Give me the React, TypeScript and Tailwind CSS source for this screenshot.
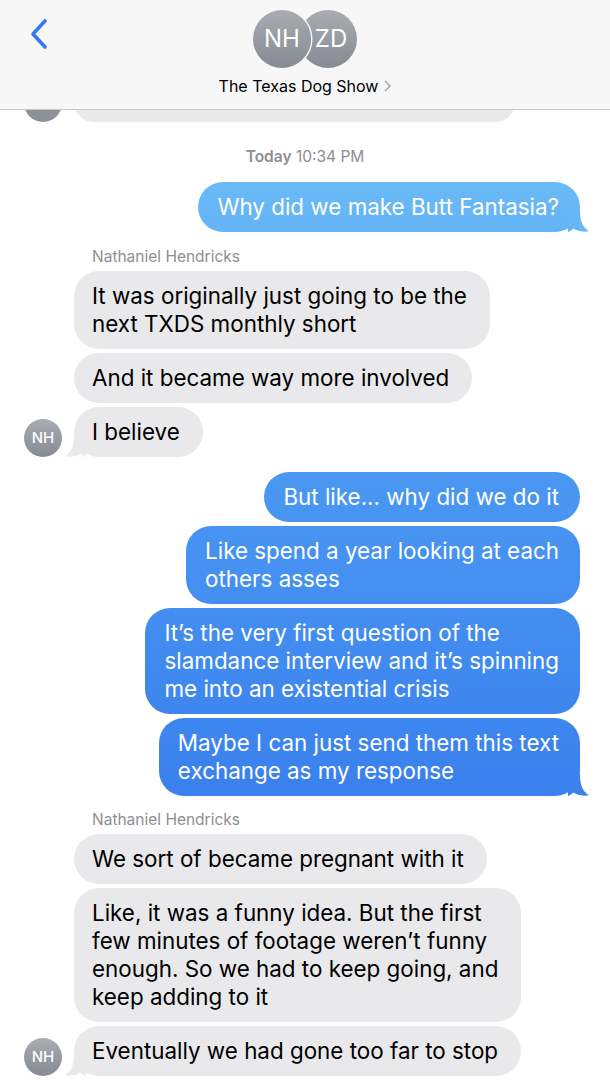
import React from 'react';

type Msg = { text: React.ReactNode; tail?: boolean; avatar?: boolean };

const font = { fontFamily: 'Inter, "Liberation Sans", sans-serif' };

const SentTail = ({ color }: { color: string }) => (
  <svg className="absolute -right-[10px] bottom-0" width="22" height="22" viewBox="0 0 22 22">
    <path d="M0 0 H12 C12 10 14 17 21 21.3 C14 22.4 9 21 5.5 18.6 C3.5 20.5 1.5 21.5 0 22 Z" fill={color} />
  </svg>
);

const ReceivedTail = () => (
  <svg className="absolute -left-[10px] bottom-0" width="22" height="22" viewBox="0 0 22 22">
    <path d="M22 0 H10 C10 10 8 17 1 21.3 C8 22.4 13 21 16.5 18.6 C18.5 20.5 20.5 21.5 22 22 Z" fill="#e9e9eb" />
  </svg>
);

const Avatar = ({ size = 'small' }: { size?: 'small' | 'big' }) => (
  <div
    className={
      size === 'small'
        ? 'w-[38px] h-[38px] rounded-full bg-gradient-to-b from-[#a9acb3] to-[#868a92] flex items-center justify-center text-white text-[15px] font-medium'
        : 'w-[58px] h-[58px] rounded-full bg-gradient-to-b from-[#a9acb3] to-[#868a92] flex items-center justify-center text-white text-[24px]'
    }
  >
    NH
  </div>
);

const Sent = ({ text, tail, tailColor }: { text: React.ReactNode; tail?: boolean; tailColor?: string }) => (
  <div className="flex justify-end pr-[30px]">
    <div className="relative max-w-[450px] rounded-[25px] pl-[19px] pr-[21px] py-[11px] text-[22.4px] leading-[28px] text-white bg-fixed bg-[linear-gradient(180deg,#6abaf7_180px,#4a97f2_480px,#3a80ee_800px)]">
      {text}
      {tail && tailColor && <SentTail color={tailColor} />}
    </div>
  </div>
);

const Received = ({ text, tail, avatar }: Msg) => (
  <div className="flex items-end pl-[24px]">
    <div className="w-[38px] mr-[12px] shrink-0">{avatar && <Avatar />}</div>
    <div className="relative max-w-[460px] rounded-[25px] pl-[18px] pr-[23px] py-[11px] text-[22.4px] leading-[28px] text-black bg-[#e9e9eb]">
      {text}
      {tail && <ReceivedTail />}
    </div>
  </div>
);

const SenderName = () => (
  <div className="pl-[92px] text-[15.5px] leading-[18px] text-[#8e8e93]">Nathaniel Hendricks</div>
);

export default function App() {
  return (
    <div className="w-[610px] h-[1080px] overflow-hidden bg-white" style={font}>
      {/* header */}
      <div className="relative h-[110px] bg-[#f7f7f7] border-b border-[#c9c9cc] flex flex-col items-center">
        <svg className="absolute left-[28px] top-[18px]" width="22" height="32" viewBox="0 0 22 32">
          <path d="M17 3 L5 16 L17 29" fill="none" stroke="#3478f6" strokeWidth="3.6" strokeLinecap="round" strokeLinejoin="round" />
        </svg>
        <div className="flex mt-[10px]">
          <div className="relative z-10 rounded-full ring-[1.5px] ring-[#f7f7f7]">
            <Avatar size="big" />
          </div>
          <div className="-ml-[12px] w-[58px] h-[58px] rounded-full bg-gradient-to-b from-[#a9acb3] to-[#868a92] flex items-center justify-center text-white text-[24px] pl-[6px]">
            ZD
          </div>
        </div>
        <div className="mt-[8px] flex items-center gap-[6px] text-[16px] leading-[20px] text-black">
          <span>The Texas Dog Show</span>
          <svg width="7" height="12" viewBox="0 0 7 12">
            <path d="M1 1 L6 6 L1 11" fill="none" stroke="#a0a0a5" strokeWidth="1.4" />
          </svg>
        </div>
      </div>

      {/* bottom of a previous message scrolled under the header */}
      <div className="h-[12px] overflow-hidden flex items-end pl-[24px]">
        <div className="w-[38px] h-[38px] rounded-full bg-[#8e9197] mr-[12px] shrink-0" />
        <div className="w-[441px] h-[40px] rounded-[25px] bg-[#e9e9eb]" />
      </div>

      <div className="mt-[26px] text-center text-[15.5px] leading-[18px] text-[#8e8e93]">
        <span className="font-semibold">Today</span> 10:34 PM
      </div>

      <div className="mt-[16px]">
        <Sent text="Why did we make Butt Fantasia?" tail tailColor="#67b7f6" />
      </div>

      <div className="mt-[16px] flex flex-col gap-[4px]">
        <SenderName />
        <div className="mt-[1px] flex flex-col gap-[4px]">
          <Received text={<>It was originally just going to be the<br />next TXDS monthly short</>} />
          <Received text="And it became way more involved" />
          <Received text="I believe" tail avatar />
        </div>
      </div>

      <div className="mt-[15px] flex flex-col gap-[4px]">
        <Sent text="But like... why did we do it" />
        <Sent text={<>Like spend a year looking at each<br />others asses</>} />
        <Sent text={<>It’s the very first question of the<br />slamdance interview and it’s spinning<br />me into an existential crisis</>} />
        <Sent text={<>Maybe I can just send them this text<br />exchange as my response</>} tail tailColor="#3b82ee" />
      </div>

      <div className="mt-[15px] flex flex-col gap-[4px]">
        <SenderName />
        <div className="mt-[1px] flex flex-col gap-[4px]">
          <Received text="We sort of became pregnant with it" />
          <Received text={<>Like, it was a funny idea. But the first<br />few minutes of footage weren’t funny<br />enough. So we had to keep going, and<br />keep adding to it</>} />
          <Received text="Eventually we had gone too far to stop" tail avatar />
        </div>
      </div>
    </div>
  );
}
